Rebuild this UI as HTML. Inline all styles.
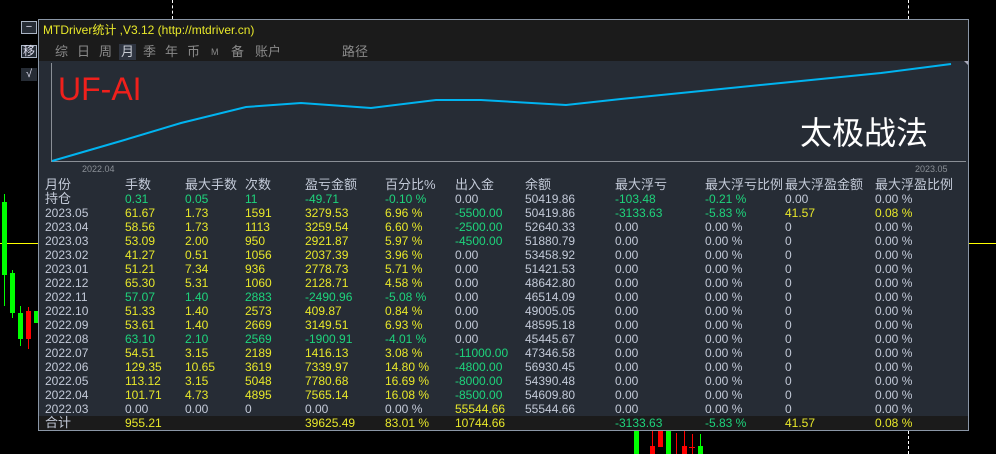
<!DOCTYPE html>
<html><head><meta charset="utf-8"><style>
*{margin:0;padding:0;box-sizing:border-box}
body{width:996px;height:454px;background:#000;position:relative;overflow:hidden;font-family:"Liberation Sans","Noto Sans CJK SC",sans-serif}
.a{position:absolute}
#panel{position:absolute;left:38px;top:19px;width:931px;height:412px;border:1px solid #8a96a6;background:#262c35}
.row{position:absolute;left:0;width:929px;height:14px;font-size:12px;line-height:14px}
.row span{position:absolute;top:0;white-space:nowrap}
.g{color:#c3cad8}.y{color:#e8e82a}.n{color:#1ed47c}
.btn{position:absolute;left:21px;width:16px;height:13px;border:1px solid #aab4c4;background:#262c35;color:#dde;font-size:11px;line-height:11px;text-align:center}
.t{position:absolute;top:24px;font-size:13px;color:#8a8a8a;line-height:16px}
</style></head><body>
<div class="a" style="left:172px;top:0;height:19px;border-left:1px dashed #fff"></div>
<div class="a" style="left:908px;top:0;height:19px;border-left:1px dashed #fff"></div>
<div class="a" style="left:908px;top:431px;height:23px;border-left:1px dashed #fff"></div>
<div class="a" style="left:0;top:243px;width:38px;height:1px;background:#ffff00"></div>
<div class="a" style="left:969px;top:243px;width:27px;height:1px;background:#ffff00"></div>
<div class="a" style="left:4px;top:194px;width:1px;height:112px;background:#0f0"></div>
<div class="a" style="left:2px;top:202px;width:5px;height:73px;background:#0f0"></div>
<div class="a" style="left:12px;top:270px;width:1px;height:48px;background:#0f0"></div>
<div class="a" style="left:10px;top:273px;width:5px;height:40px;background:#0f0"></div>
<div class="a" style="left:20px;top:306px;width:1px;height:40px;background:#0f0"></div>
<div class="a" style="left:18px;top:313px;width:5px;height:26px;background:#0f0"></div>
<div class="a" style="left:28px;top:307px;width:1px;height:42px;background:#f00"></div>
<div class="a" style="left:26px;top:311px;width:5px;height:28px;background:#f00"></div>
<div class="a" style="left:34px;top:311px;width:4px;height:12px;background:#0f0"></div>
<div class="a" style="left:634px;top:431px;width:5px;height:23px;background:#0f0"></div>
<div class="a" style="left:652px;top:431px;width:1px;height:23px;background:#f00"></div>
<div class="a" style="left:650px;top:446px;width:5px;height:8px;background:#f00"></div>
<div class="a" style="left:658px;top:431px;width:5px;height:16px;background:#f00"></div>
<div class="a" style="left:666px;top:431px;width:5px;height:23px;background:#0f0"></div>
<div class="a" style="left:676px;top:433px;width:1px;height:21px;background:#f00"></div>
<div class="a" style="left:684px;top:431px;width:1px;height:23px;background:#f00"></div>
<div class="a" style="left:682px;top:446px;width:5px;height:8px;background:#f00"></div>
<div class="a" style="left:692px;top:434px;width:1px;height:20px;background:#f00"></div>
<div class="a" style="left:689px;top:447px;width:6px;height:1px;background:#f00"></div>
<div class="a" style="left:700px;top:434px;width:1px;height:20px;background:#0f0"></div>
<div class="a" style="left:698px;top:446px;width:5px;height:8px;background:#0f0"></div>
<div class="btn" style="top:21px">−</div>
<div class="btn" style="top:45px;font-size:12px">移</div>
<div class="btn" style="top:68px;border-color:#262c35">√</div>

<div id="panel">
<div class="a" style="left:0;top:0;width:929px;height:41px;background:#1b1b1b"></div>
<div class="a" style="left:4px;top:3px;font-size:12px;color:#e8e82a;line-height:14px">MTDriver统计 ,V3.12 (http://mtdriver.cn)</div>
<div class="a" style="left:80px;top:24px;width:17px;height:16px;background:#2e3440"></div>
<span class="t" style="left:16px">综</span><span class="t" style="left:38px">日</span><span class="t" style="left:60px">周</span><span class="t" style="left:82px;color:#c8ccd4">月</span><span class="t" style="left:104px">季</span><span class="t" style="left:126px">年</span><span class="t" style="left:148px">币</span><span class="t" style="left:172px;font-size:9px">M</span><span class="t" style="left:192px">备</span><span class="t" style="left:216px">账户</span>
<span class="t" style="left:303px">路径</span>
<svg class="a" style="left:0;top:41px" width="929" height="130">
<line x1="12.5" y1="2" x2="12.5" y2="100" stroke="#8a8f96"/>
<line x1="12" y1="100.5" x2="927" y2="100.5" stroke="#8a8f96"/>
<polyline fill="none" stroke="#00b4f0" stroke-width="2" points="13,100 82,80 142,62 207,46 262,42 332,47 397,39 442,39 527,44 582,38 662,30 762,20 842,12 912,3"/>
<polygon points="925,0 929,-3 929,4" fill="#aab"/>
<text x="43" y="111" font-size="9" fill="#8a8f96" font-family="Liberation Sans">2022.04</text>
<text x="876" y="111" font-size="9" fill="#8a8f96" font-family="Liberation Sans">2023.05</text>
</svg>
<div class="a" style="left:19px;top:51px;font-size:32px;color:#f0201c;line-height:36px">UF-AI</div>
<div class="a" style="left:761px;top:93px;font-size:32px;color:#fff;line-height:36px;font-family:'Noto Sans CJK SC',sans-serif">太极战法</div>
<div class="a" style="left:0;top:396px;width:929px;height:14px;background:#1b1b1b"></div>
<div id="rows"></div>
</div>
<script>
var X=[6,86,146,206,266,346,416,486,576,666,746,836];
var R=[
["g月份","g手数","g最大手数","g次数","g盈亏金额","g百分比%","g出入金","g余额","g最大浮亏","g最大浮亏比例","g最大浮盈金额","g最大浮盈比例"],
["g持仓","n0.31","n0.05","n11","n-49.71","n-0.10 %","g0.00","g50419.86","n-103.48","n-0.21 %","g0.00","g0.00 %"],
["g2023.05","y61.67","y1.73","y1591","y3279.53","y6.96 %","n-5500.00","g50419.86","n-3133.63","n-5.83 %","y41.57","y0.08 %"],
["g2023.04","y58.56","y1.73","y1113","y3259.54","y6.60 %","n-2500.00","g52640.33"],
["g2023.03","y53.09","y2.00","y950","y2921.87","y5.97 %","n-4500.00","g51880.79"],
["g2023.02","y41.27","y0.51","y1056","y2037.39","y3.96 %","g0.00","g53458.92"],
["g2023.01","y51.21","y7.34","y936","y2778.73","y5.71 %","g0.00","g51421.53"],
["g2022.12","y65.30","y5.31","y1060","y2128.71","y4.58 %","g0.00","g48642.80"],
["g2022.11","n57.07","n1.40","n2883","n-2490.96","n-5.08 %","g0.00","g46514.09"],
["g2022.10","y51.33","y1.40","y2573","y409.87","y0.84 %","g0.00","g49005.05"],
["g2022.09","y53.61","y1.40","y2669","y3149.51","y6.93 %","g0.00","g48595.18"],
["g2022.08","n63.10","n2.10","n2569","n-1900.91","n-4.01 %","g0.00","g45445.67"],
["g2022.07","y54.51","y3.15","y2189","y1416.13","y3.08 %","n-11000.00","g47346.58"],
["g2022.06","y129.35","y10.65","y3619","y7339.97","y14.80 %","n-4800.00","g56930.45"],
["g2022.05","y113.12","y3.15","y5048","y7780.68","y16.69 %","n-8000.00","g54390.48"],
["g2022.04","y101.71","y4.73","y4895","y7565.14","y16.08 %","n-8500.00","g54609.80"],
["g2022.03","g0.00","g0.00","g0","g0.00","g0.00 %","y55544.66","g55544.66"],
["g合计","y955.21","","","y39625.49","y83.01 %","y10744.66","","n-3133.63","n-5.83 %","y41.57","y0.08 %"]
];
var h="";
R.forEach(function(r,i){
 if(r.length==8) r=r.concat(["g0.00","g0.00 %","g0","g0.00 %"]);
 h+='<div class="row" style="top:'+(158+14*i)+'px">';
 r.forEach(function(c,j){ if(!c)return; var big=(i==0||i==1&&j==0||i==17&&j==0);
  h+='<span class="'+c[0]+'" style="left:'+X[j]+'px'+(big?';font-size:13px':'')+'">'+c.slice(1)+'</span>';});
 h+='</div>';
});
document.getElementById("rows").innerHTML=h;
</script>
</body></html>
